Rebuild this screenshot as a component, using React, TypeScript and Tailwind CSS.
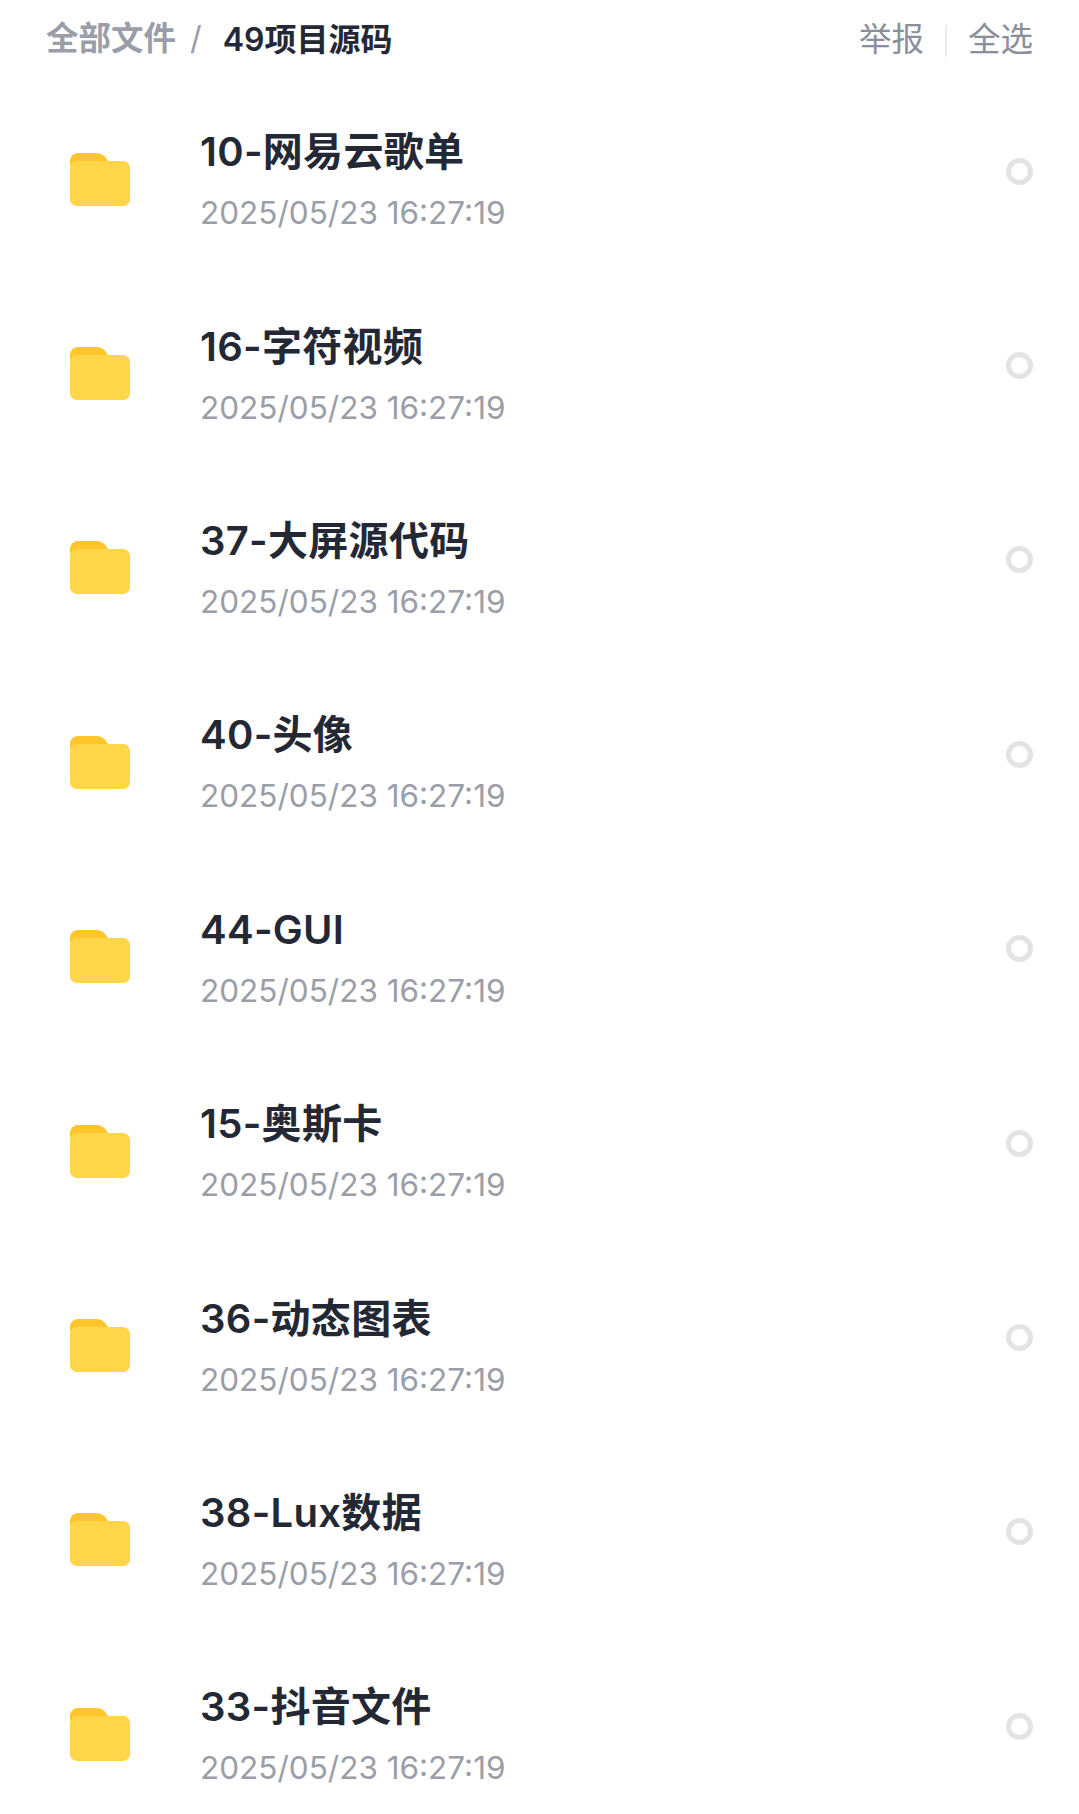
import React from 'react';

const folders = [
  '10-网易云歌单',
  '16-字符视频',
  '37-大屏源代码',
  '40-头像',
  '44-GUI',
  '15-奥斯卡',
  '36-动态图表',
  '38-Lux数据',
  '33-抖音文件',
];

function FolderIcon() {
  return (
    <svg viewBox="0 0 60 53" className="w-[60px] h-[53px] shrink-0 mt-[16px]">
      <path d="M0 8a8 8 0 0 1 8-8h18c6 0 9 3 12 8l2 4H0z" fill="#FFC62C" />
      <rect x="0" y="8" width="60" height="45" rx="7" fill="#FFD54A" />
      <path d="M0 16a8 8 0 0 1 8-8h30l0 0H8a8 8 0 0 0-8 8z" fill="#FFC62C" />
    </svg>
  );
}

function FolderRow({ name }: { name: string }) {
  return (
    <div className="h-[194.4px] flex items-center pl-[70px] pr-[46px]">
      <FolderIcon />
      <div className="ml-[70px] flex-1 mt-[19px]">
        <div className="text-[40px] leading-[48px] tracking-[0.3px] font-semibold text-[#232834]">{name}</div>
        <div className="text-[31.5px] leading-[40px] mt-[17px] text-[#9a9ea8]">2025/05/23 16:27:19</div>
      </div>
      <div className="w-[27px] h-[27px] rounded-full border-[5px] border-[#e3e3e3]" />
    </div>
  );
}

export default function App() {
  return (
    <div className="w-[1079px] h-[1814px] overflow-hidden bg-white font-['Inter','Noto_Sans_CJK_SC',sans-serif]">
      <div className="h-[79px] flex items-center justify-between pl-[46px] pr-[46px] text-[32.5px]">
        <div className="flex items-center font-semibold">
          <span className="text-[#9a9ea8]">全部文件</span>
          <span className="ml-[14px] text-[#9a9ea8] font-normal">/</span>
          <span className="ml-[21px] text-[32px] text-[#232834]">49项目源码</span>
        </div>
        <div className="flex items-center mt-[2px] text-[#8a8e99]">
          <span>举报</span>
          <span className="w-[2px] h-[32px] mx-[21px] bg-[#ebebeb]" />
          <span>全选</span>
        </div>
      </div>
      <div className="-mt-[5px]">
        {folders.map((name) => (
          <FolderRow key={name} name={name} />
        ))}
      </div>
    </div>
  );
}
